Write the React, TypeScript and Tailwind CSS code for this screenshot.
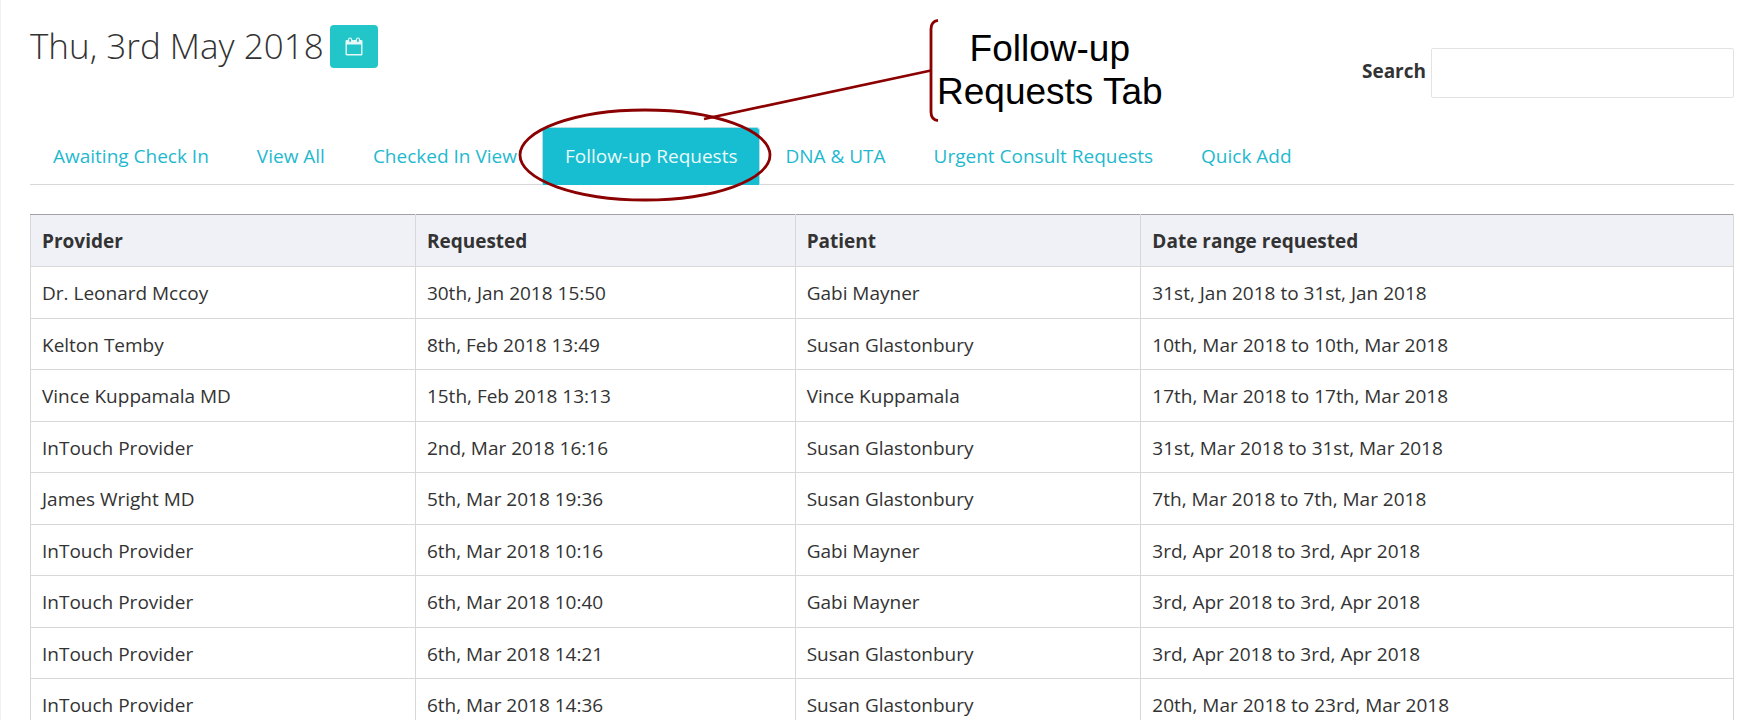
type FollowUp = {
  provider: string;
  requested: string;
  patient: string;
  range: string;
};

const tabs = [
  "Awaiting Check In",
  "View All",
  "Checked In View",
  "Follow-up Requests",
  "DNA & UTA",
  "Urgent Consult Requests",
  "Quick Add",
];

const activeTab = "Follow-up Requests";

const rows: FollowUp[] = [
  { provider: "Dr. Leonard Mccoy", requested: "30th, Jan 2018 15:50", patient: "Gabi Mayner", range: "31st, Jan 2018 to 31st, Jan 2018" },
  { provider: "Kelton Temby", requested: "8th, Feb 2018 13:49", patient: "Susan Glastonbury", range: "10th, Mar 2018 to 10th, Mar 2018" },
  { provider: "Vince Kuppamala MD", requested: "15th, Feb 2018 13:13", patient: "Vince Kuppamala", range: "17th, Mar 2018 to 17th, Mar 2018" },
  { provider: "InTouch Provider", requested: "2nd, Mar 2018 16:16", patient: "Susan Glastonbury", range: "31st, Mar 2018 to 31st, Mar 2018" },
  { provider: "James Wright MD", requested: "5th, Mar 2018 19:36", patient: "Susan Glastonbury", range: "7th, Mar 2018 to 7th, Mar 2018" },
  { provider: "InTouch Provider", requested: "6th, Mar 2018 10:16", patient: "Gabi Mayner", range: "3rd, Apr 2018 to 3rd, Apr 2018" },
  { provider: "InTouch Provider", requested: "6th, Mar 2018 10:40", patient: "Gabi Mayner", range: "3rd, Apr 2018 to 3rd, Apr 2018" },
  { provider: "InTouch Provider", requested: "6th, Mar 2018 14:21", patient: "Susan Glastonbury", range: "3rd, Apr 2018 to 3rd, Apr 2018" },
  { provider: "InTouch Provider", requested: "6th, Mar 2018 14:36", patient: "Susan Glastonbury", range: "20th, Mar 2018 to 23rd, Mar 2018" },
];

function CalendarIcon() {
  return (
    <svg viewBox="0 0 18 19" className="h-[19px] w-[18px]" fill="none" aria-hidden="true">
      <path d="M1.2 3.5h15.6v4H1.2z" fill="#e6f8f8" />
      <rect x="1.2" y="3.6" width="15.6" height="14.2" rx="0.6" stroke="#e6f8f8" strokeWidth="1.4" />
      <rect x="3.6" y="1" width="3" height="4.6" rx="1.4" fill="#23c6c8" stroke="#e6f8f8" strokeWidth="1.2" />
      <rect x="11.4" y="1" width="3" height="4.6" rx="1.4" fill="#23c6c8" stroke="#e6f8f8" strokeWidth="1.2" />
    </svg>
  );
}

function Callout() {
  return (
    <div className="pointer-events-none absolute left-0 top-0">
      <svg width="950" height="210" viewBox="0 0 950 210" fill="none" stroke="#8b0000" strokeWidth="2.8" aria-hidden="true">
        <ellipse cx="644" cy="155" rx="125" ry="45" />
        <path d="M703 119L930 70.5" />
        <path d="M937 20.3C932.5 21 930 24 930 29V112C930 117 932.5 120 937 120.7" />
      </svg>
      <p className="absolute left-[936px] top-[27px] whitespace-nowrap text-center font-['Liberation_Sans',sans-serif] text-[37px] leading-[43px] text-black">
        Follow-up
        <br />
        Requests Tab
      </p>
    </div>
  );
}

export default function App() {
  return (
    <div className="relative h-screen overflow-hidden border-l border-[#f0f0f6] bg-white pl-[29px] pr-6 font-['Open_Sans',sans-serif] text-[19px] leading-[27px] text-[#333]">
      <header className="flex items-start justify-between pt-[25px]">
        <div className="flex items-center gap-1.5">
          <h1 className="pb-0.5 text-[35px] font-light leading-[41px]">Thu, 3rd May 2018</h1>
          <button type="button" aria-label="Choose date" className="flex h-[43px] w-12 items-center justify-center rounded bg-[#23c6c8]">
            <CalendarIcon />
          </button>
        </div>
        <div className="flex items-center gap-[5px] pt-[23px]">
          <label htmlFor="search" className="pb-[3px] font-bold">
            Search
          </label>
          <input id="search" type="text" className="h-[50px] w-[303px] rounded-xs border border-[#e3e3e3] bg-white px-4 outline-none" />
        </div>
      </header>

      <nav className="mt-[29px] flex gap-0.5 border-b border-[#d8d8d8]">
        {tabs.map((tab) => (
          <a
            key={tab}
            href="#"
            className={
              tab === activeTab
                ? "-mb-px rounded-t-sm border border-b-0 border-[#b5dfe4] bg-[#17bdd0] px-[22px] py-[15px] text-[#eafafb]"
                : "rounded-t-sm border border-b-0 border-transparent px-[22px] py-[15px] pb-3.5 text-[#1fb9cf]"
            }
          >
            {tab}
          </a>
        ))}
      </nav>

      <table className="mt-[29px] w-full table-fixed border-collapse text-left">
        <thead>
          <tr className="h-[52px] bg-[#f0f1f6]">
            <th className="w-[22.6%] border border-[#d8d8d8] border-t-[#a3a3a3] px-[11px] pt-0.5 font-bold">Provider</th>
            <th className="w-[22.3%] border border-[#d8d8d8] border-t-[#a3a3a3] px-[11px] pt-0.5 font-bold">Requested</th>
            <th className="w-[20.3%] border border-[#d8d8d8] border-t-[#a3a3a3] px-[11px] pt-0.5 font-bold">Patient</th>
            <th className="border border-[#d8d8d8] border-t-[#a3a3a3] px-[11px] pt-0.5 font-bold">Date range requested</th>
          </tr>
        </thead>
        <tbody>
          {rows.map((row) => (
            <tr key={row.requested} className="odd:h-[52px] even:h-[51px]">
              <td className="border border-[#d8d8d8] px-[11px] pt-0.5">{row.provider}</td>
              <td className="border border-[#d8d8d8] px-[11px] pt-0.5">{row.requested}</td>
              <td className="border border-[#d8d8d8] px-[11px] pt-0.5">{row.patient}</td>
              <td className="border border-[#d8d8d8] px-[11px] pt-0.5">{row.range}</td>
            </tr>
          ))}
        </tbody>
      </table>

      <Callout />
    </div>
  );
}
